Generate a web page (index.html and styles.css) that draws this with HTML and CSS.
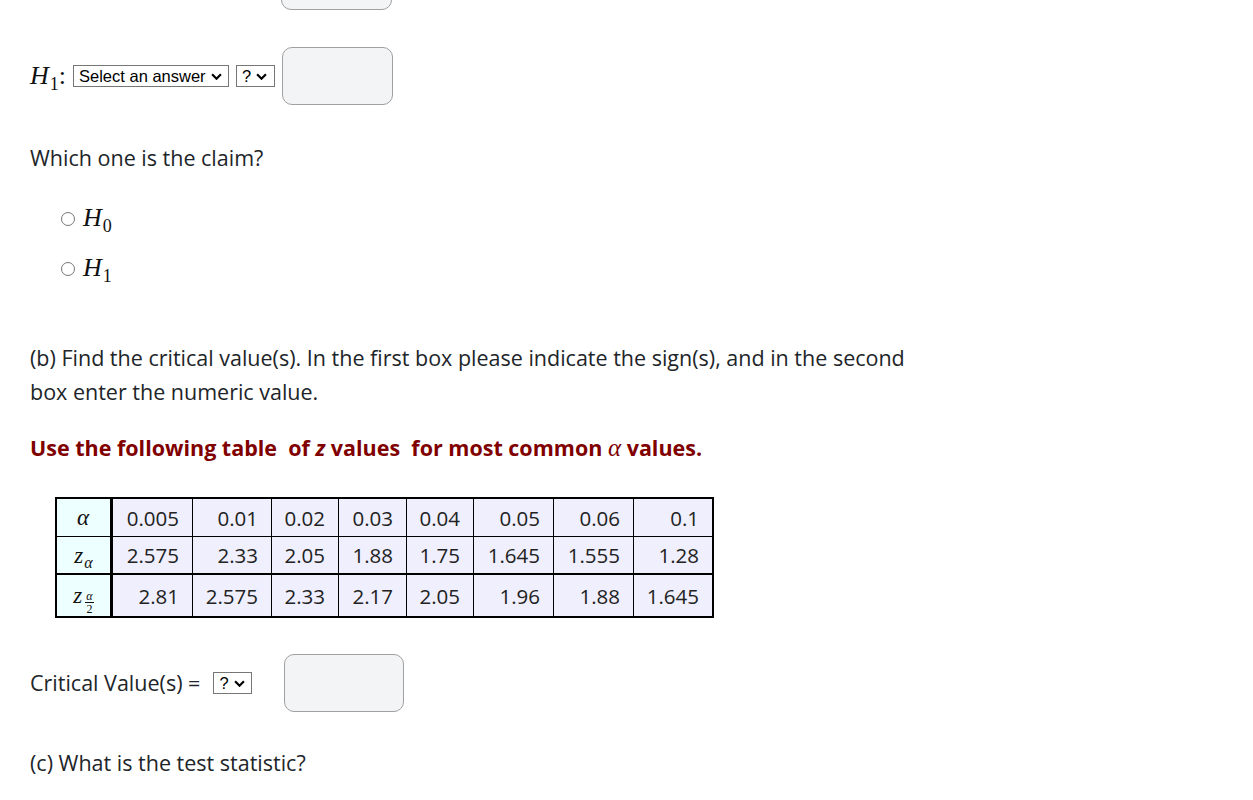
FILE: index.html
```html
<!DOCTYPE html>
<html>
<head>
<meta charset="utf-8">
<link rel="stylesheet" href="styles.css">
</head>
<body>
<div class="page">
  <div class="hyp-row first">
    <span class="box"></span>
  </div>
  <div class="hyp-row">
    <span class="math hlabel"><i>H</i><sub>1</sub>:</span>
    <span class="sel wide">Select an answer<svg class="chev" viewBox="0 0 10 6"><path d="M1 1l4 4 4-4"/></svg></span>
    <span class="sel small">?<svg class="chev" viewBox="0 0 10 6"><path d="M1 1l4 4 4-4"/></svg></span>
    <span class="box"></span>
  </div>

  <p class="txt claim">Which one is the claim?</p>
  <div class="radios">
    <label class="radio"><span class="dot"></span><span class="math"><i>H</i><sub>0</sub></span></label>
    <label class="radio"><span class="dot"></span><span class="math"><i>H</i><sub>1</sub></span></label>
  </div>

  <p class="txt partb">(b) Find the critical value(s). In the first box please indicate the sign(s), and in the second box enter the numeric value.</p>

  <p class="note">Use the following table&nbsp; of <i>z</i> values&nbsp; for most common <span class="greek">α</span> values.</p>

  <table class="ztable">
    <tr class="r1">
      <th><span class="math"><i>α</i></span></th>
      <td class="c1">0.005</td><td class="c2">0.01</td><td class="c3">0.02</td><td class="c4">0.03</td><td class="c5">0.04</td><td class="c6">0.05</td><td class="c7">0.06</td><td class="c8">0.1</td>
    </tr>
    <tr class="r2">
      <th><span class="math"><i>z</i><sub><i>α</i></sub></span></th>
      <td>2.575</td><td>2.33</td><td>2.05</td><td>1.88</td><td>1.75</td><td>1.645</td><td>1.555</td><td>1.28</td>
    </tr>
    <tr class="r3">
      <th><span class="math zfrac"><i>z</i><span class="frac"><span class="num"><i>α</i></span><span class="den">2</span></span></span></th>
      <td>2.81</td><td>2.575</td><td>2.33</td><td>2.17</td><td>2.05</td><td>1.96</td><td>1.88</td><td>1.645</td>
    </tr>
  </table>

  <div class="crit-row">
    <span class="txt">Critical Value(s) =</span>
    <span class="sel small">?<svg class="chev" viewBox="0 0 10 6"><path d="M1 1l4 4 4-4"/></svg></span>
    <span class="box crit"></span>
  </div>

  <p class="txt partc">(c) What is the test statistic?</p>
</div>
</body>
</html>
```
FILE: styles.css
```css
html, body {
  margin: 0;
  padding: 0;
  background: #ffffff;
  overflow: hidden;
}
body {
  font-family: "Open Sans", "Noto Sans", sans-serif;
  color: #212529;
}
.page {
  padding-left: 30px;
  width: 900px;
}
.math {
  font-family: "Liberation Serif", "DejaVu Serif", serif;
  font-size: 26px;
  color: #111;
}
.math > i {
  padding-right: 1px;
}
.math sub {
  font-size: 18px;
  font-style: normal;
  vertical-align: -6px;
  line-height: 0;
}
.hyp-row {
  display: flex;
  align-items: center;
  height: 58px;
  margin-bottom: 37px;
}
.hyp-row.first {
  margin-top: -48px;
  padding-left: 251px;
}
.hlabel {
  margin-right: 7px;
}
.sel {
  display: inline-flex;
  align-items: center;
  box-sizing: border-box;
  height: 22px;
  border: 1px solid #767676;
  background: #fff;
  font-family: "Liberation Sans", Arial, sans-serif;
  font-size: 16.5px;
  color: #000;
  padding: 0 0 0 5px;
  margin-right: 7px;
  gap: 5px;
}
.sel.wide {
  width: 156px;
}
.sel.small {
  width: 39px;
}
.chev {
  width: 11px;
  height: 7px;
  fill: none;
  stroke: #000;
  stroke-width: 2;
}
.box {
  display: inline-block;
  width: 109px;
  height: 56px;
  border: 1px solid #a0a0a0;
  border-radius: 10px;
  background: #f3f4f6;
}
.txt {
  font-size: 21.5px;
  line-height: 34px;
  margin: 0;
}
.claim {
  margin-top: -1px;
}
.radios {
  display: flex;
  flex-direction: column;
  gap: 16px;
  padding-left: 31px;
  margin-top: 26px;
}
.radio {
  display: flex;
  align-items: center;
  height: 34px;
}
.dot {
  width: 12px;
  height: 12px;
  border: 1px solid #767676;
  border-radius: 50%;
  margin-right: 8px;
  margin-top: 2px;
}
.partb {
  margin-top: 56px;
  width: 880px;
}
.note {
  margin: 22px 0 0;
  font-family: "Open Sans", "Noto Sans", sans-serif;
  font-weight: 700;
  font-size: 21.5px;
  line-height: 34px;
  color: #800000;
}
.note .greek {
  font-family: "Liberation Serif", serif;
  font-style: italic;
  font-weight: 400;
  font-size: 25px;
}
.ztable {
  margin: 32px 0 0 25px;
  border-collapse: collapse;
  border: 2px solid #000;
  font-size: 20.5px;
}
.ztable th, .ztable td {
  border: 1px solid #000;
  padding: 0 13px 0 0;
  text-align: right;
  background: #efeffd;
  font-weight: 400;
  color: #222;
  line-height: 24px;
}
.ztable th {
  width: 53px;
  padding: 0;
  text-align: center;
  background: #eeffff;
  border-right: 3px solid #000;
}
.ztable .math {
  font-size: 23px;
}
.ztable .math sub {
  font-size: 16px;
  font-style: italic;
  vertical-align: -5px;
}
.r1 th, .r1 td { height: 37px; }
.r2 th, .r2 td { height: 36px; }
.r3 th, .r3 td { height: 41px; border-top: 2px solid #000; }
.ztable .zfrac {
  display: inline-flex;
  align-items: center;
  line-height: 20px;
}
.c1 { width: 66px; }
.c2 { width: 65px; }
.c3 { width: 53px; }
.c4 { width: 54px; }
.c5 { width: 53px; }
.c6 { width: 66px; }
.c7 { width: 66px; }
.c8 { width: 65px; }
.frac {
  display: inline-flex;
  flex-direction: column;
  align-items: center;
  font-size: 12px;
  line-height: 10px;
  margin-left: 2px;
  margin-top: 14px;
}
.frac .num {
  border-bottom: 1px solid #111;
  padding: 0 1px 1px;
}
.frac .den {
  font-style: normal;
  padding-top: 1px;
}
.crit-row {
  display: flex;
  align-items: center;
  height: 58px;
  margin-top: 36px;
}
.crit-row .txt {
  margin-right: 13px;
}
.crit-row .sel {
  margin-right: 32px;
}
.box.crit {
  width: 118px;
}
.partc {
  margin-top: 34px;
}
```
